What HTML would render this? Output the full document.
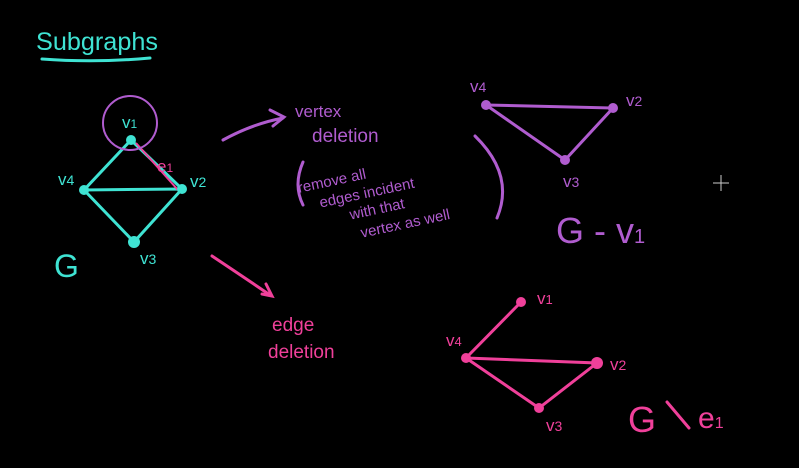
<!DOCTYPE html>
<html><head><meta charset="utf-8"><style>
html,body{margin:0;padding:0;background:#000;width:799px;height:468px;overflow:hidden}
svg{display:block}
text{font-family:"Liberation Sans",sans-serif}
</style></head><body>
<svg width="799" height="468" viewBox="0 0 799 468" xmlns="http://www.w3.org/2000/svg">
<rect width="799" height="468" fill="#000"/>
<text x="36" y="50" font-size="25" fill="#3fe3d3" textLength="122" lengthAdjust="spacingAndGlyphs">Subgraphs</text>
<path d="M42 59 Q95 63 150 58" stroke="#3fe3d3" stroke-width="3" fill="none" stroke-linecap="round"/>
<g stroke="#3fe3d3" stroke-width="3" fill="none" stroke-linecap="round">
<path d="M131 140 L84 190 L182 189 L134 242 L84 190"/>
<path d="M131 140 L182 189"/>
</g>
<path d="M136 143 L178 190" stroke="#f0409a" stroke-width="2" fill="none"/>
<g fill="#3fe3d3"><circle cx="131" cy="140" r="5"/><circle cx="84" cy="190" r="5"/><circle cx="182" cy="189" r="5"/><circle cx="134" cy="242" r="6"/></g>
<circle cx="130" cy="123" r="27" stroke="#b05ccf" stroke-width="2" fill="none"/>
<g fill="#3fe3d3" font-size="17">
<text x="122" y="128">v<tspan font-size="12">1</tspan></text>
<text x="58" y="185">v<tspan font-size="14">4</tspan></text>
<text x="190" y="187">v<tspan font-size="14">2</tspan></text>
<text x="140" y="264">v<tspan font-size="14">3</tspan></text>
<text x="54" y="277" font-size="32">G</text>
</g>
<text x="157" y="172" fill="#f0409a" font-size="17">e<tspan font-size="12">1</tspan></text>
<g stroke="#b05ccf" stroke-width="3" fill="none" stroke-linecap="round">
<path d="M223 140 Q252 124 283 118"/>
<path d="M270 110 L284 117 L273 126"/>
<path d="M303 162 Q293 185 303 205"/>
<path d="M475 136 Q515 175 497 218"/>
</g>
<g fill="#b05ccf" font-size="17">
<text x="295" y="117">vertex</text>
<text x="312" y="142" font-size="19">deletion</text>
<g transform="rotate(-12 370 190)">
<text x="300" y="178" font-size="15">remove all</text>
<text x="318" y="197" font-size="15">edges incident</text>
<text x="345" y="215" font-size="15">with that</text>
<text x="352" y="235" font-size="15">vertex as well</text>
</g>
</g>
<g stroke="#b05ccf" stroke-width="3" fill="none" stroke-linecap="round">
<path d="M486 105 L613 108 L565 160 Z"/>
</g>
<g fill="#b05ccf"><circle cx="486" cy="105" r="5"/><circle cx="613" cy="108" r="5"/><circle cx="565" cy="160" r="5"/></g>
<g fill="#b05ccf" font-size="17">
<text x="470" y="92">v<tspan font-size="14">4</tspan></text>
<text x="626" y="106">v<tspan font-size="14">2</tspan></text>
<text x="563" y="187">v<tspan font-size="14">3</tspan></text>
<text x="556" y="243" font-size="36">G - v<tspan font-size="20">1</tspan></text>
</g>
<g stroke="#ccc" stroke-width="1"><path d="M713 183 H729 M721 175 V191"/></g>
<g stroke="#f0409a" stroke-width="3" fill="none" stroke-linecap="round">
<path d="M212 256 Q245 278 270 295"/>
<path d="M262 294 L272 296 L266 284"/>
</g>
<g fill="#f0409a">
<text x="272" y="331" font-size="19">edge</text>
<text x="268" y="358" font-size="19">deletion</text>
</g>
<g stroke="#f0409a" stroke-width="3" fill="none" stroke-linecap="round">
<path d="M521 302 L466 358 L597 363 L539 408 L466 358"/>
</g>
<g fill="#f0409a"><circle cx="521" cy="302" r="5"/><circle cx="466" cy="358" r="5"/><circle cx="597" cy="363" r="6"/><circle cx="539" cy="408" r="5"/></g>
<g fill="#f0409a" font-size="17">
<text x="537" y="304">v<tspan font-size="13">1</tspan></text>
<text x="446" y="346">v<tspan font-size="13">4</tspan></text>
<text x="610" y="370">v<tspan font-size="14">2</tspan></text>
<text x="546" y="431">v<tspan font-size="14">3</tspan></text>
<text x="628" y="432" font-size="36">G</text>
<text x="698" y="428" font-size="30">e<tspan font-size="16">1</tspan></text>
</g>
<path d="M667 402 L689 428" stroke="#f0409a" stroke-width="3" stroke-linecap="round"/>
</svg>
</body></html>
